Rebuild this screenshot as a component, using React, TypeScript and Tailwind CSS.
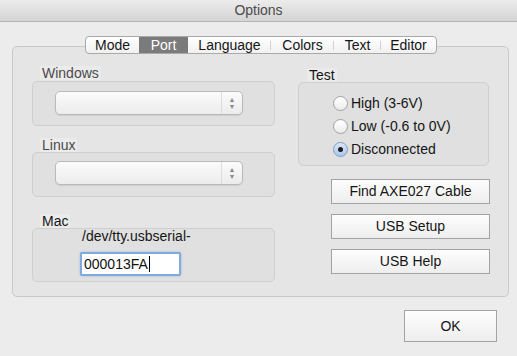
import React from "react";

const tabs = [
  { name: "Mode", w: "w-[53px]" },
  { name: "Port", w: "w-[49px]" },
  { name: "Language", w: "w-[83px]" },
  { name: "Colors", w: "w-[63px]" },
  { name: "Text", w: "w-[47px]" },
  { name: "Editor", w: "w-[55px]" },
];

function Popup() {
  return (
    <div className="flex h-[24px] w-[188px] rounded-[5px] border border-[#b9b9b9] bg-gradient-to-b from-[#fbfbfb] to-[#ececec] shadow-[0_1px_1px_rgba(0,0,0,0.08)]">
      <div className="flex-1" />
      <div className="flex w-[21px] flex-col items-center justify-center border-l border-[#dcdcdc] text-[7px] leading-[7px] text-[#8a8a8a]">
        <span>▲</span>
        <span>▼</span>
      </div>
    </div>
  );
}

function Radio({ label, checked }: { label: string; checked?: boolean }) {
  return (
    <div className="flex h-[23px] items-center">
      {checked ? (
        <div className="flex h-[15px] w-[15px] items-center justify-center rounded-full border border-[#7f9cc4] bg-gradient-to-b from-[#d9e7f8] to-[#a9c8ee]">
          <div className="h-[5px] w-[5px] rounded-full bg-[#1d1d1d]" />
        </div>
      ) : (
        <div className="h-[15px] w-[15px] rounded-full border border-[#a2a2a2] bg-gradient-to-b from-[#ffffff] to-[#ececec]" />
      )}
      <span className="ml-[3px] text-[14px] text-[#151515]">{label}</span>
    </div>
  );
}

function Button({ label }: { label: string }) {
  return (
    <div className="flex h-[25px] w-[159px] items-center justify-center border border-[#a3a3a3] bg-gradient-to-b from-[#fdfdfd] to-[#eeeeee] text-[14px] text-[#151515]">
      {label}
    </div>
  );
}

export default function App() {
  return (
    <div
      className="h-[356px] w-[517px] overflow-hidden bg-[#ececec] text-[14px] text-[#151515]"
      style={{ fontFamily: '"Liberation Sans", Arial, sans-serif' }}
    >
      <div className="flex h-[22px] items-center justify-center border-b border-[#b5b5b5] bg-gradient-to-b from-[#ececec] to-[#d4d4d4] text-[14px] text-[#4a4a4a]">
        Options
      </div>

      <div className="relative z-10 mt-[14px] flex justify-center pl-[5px]">
        <div className="flex h-[18px] overflow-hidden rounded-[4px] border border-[#a9a9a9] bg-gradient-to-b from-[#ffffff] to-[#f1f1f1]">
          {tabs.map((t, i) => {
            const sel = t.name === "Port";
            const next = tabs[i + 1];
            const showDiv = !sel && next && next.name !== "Port" && i < tabs.length - 1;
            return (
              <div
                key={t.name}
                className={`relative flex ${t.w} items-center justify-center leading-[16px] ${
                  sel ? "bg-[#7b7b7b] text-white" : "text-[#151515]"
                }`}
              >
                {t.name}
                {showDiv && (
                  <div className="absolute right-0 top-[4px] h-[9px] w-px bg-[#d2d2d2]" />
                )}
              </div>
            );
          })}
        </div>
      </div>

      <div className="-mt-[8px] ml-[12px] flex h-[251px] w-[497px] gap-[23px] rounded-[5px] border border-[#c9c9c9] bg-[#e5e5e5] pl-[19px] pt-[19px]">
        {/* left column */}
        <div className="flex w-[243px] flex-col">
          <div className="ml-[8px] h-[14px] self-start bg-[#ebebeb] px-[2px] leading-[14px] text-[#4a4a4a]">
            Windows
          </div>
          <div className="mt-[1px] h-[45px] rounded-[5px] border border-[#cfcfcf] bg-[#e0e0e0] pl-[22px] pt-[9px]">
            <Popup />
          </div>

          <div className="ml-[8px] mt-[12px] h-[14px] self-start bg-[#ebebeb] px-[2px] leading-[14px] text-[#4a4a4a]">
            Linux
          </div>
          <div className="h-[45px] rounded-[5px] border border-[#cfcfcf] bg-[#e0e0e0] pl-[22px] pt-[8px]">
            <Popup />
          </div>

          <div className="ml-[8px] mt-[17px] h-[14px] self-start bg-[#ebebeb] px-[2px] leading-[14px] text-[#151515]">
            Mac
          </div>
          <div className="h-[54px] rounded-[5px] border border-[#cfcfcf] bg-[#e0e0e0] pl-[47px]">
            <div className="ml-[2px] h-[15px] leading-[15px]">/dev/tty.usbserial-</div>
            <div className="mt-[8px] flex h-[24px] w-[101px] items-center rounded-[2px] border-2 border-[#7fa9df] bg-white pl-[2px] shadow-[0_0_2px_rgba(90,140,220,0.6)]">
              <span className="text-[14px] text-[#111]">000013FA</span>
              <span className="ml-[1px] h-[16px] w-px bg-black" />
            </div>
          </div>
        </div>

        {/* right column */}
        <div className="flex w-[191px] flex-col">
          <div className="ml-[9px] mt-[2px] h-[14px] self-start bg-[#ebebeb] px-[2px] leading-[14px]">
            Test
          </div>
          <div className="h-[84px] rounded-[5px] border border-[#cfcfcf] bg-[#e0e0e0] pl-[34px] pt-[9px]">
            <Radio label="High (3-6V)" />
            <Radio label="Low (-0.6 to 0V)" />
            <Radio label="Disconnected" checked />
          </div>
          <div className="ml-[33px] mt-[13px] flex flex-col gap-[10px]">
            <Button label="Find AXE027 Cable" />
            <Button label="USB Setup" />
            <Button label="USB Help" />
          </div>
        </div>
      </div>

      <div className="mt-[13px] flex justify-end pr-[20px]">
        <div className="flex h-[32px] w-[93px] items-center justify-center border border-[#a3a3a3] bg-gradient-to-b from-[#fdfdfd] to-[#eeeeee] text-[14px]">
          OK
        </div>
      </div>
    </div>
  );
}
